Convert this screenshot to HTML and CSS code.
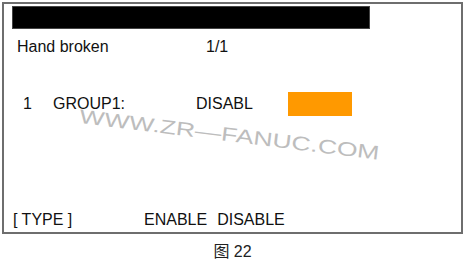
FILE: index.html
```html
<!DOCTYPE html>
<html>
<head>
<meta charset="utf-8">
<link rel="stylesheet" href="styles.css">
</head>
<body>
<div class="frame">
  <div class="titlebar"></div>
  <div class="row row-head">
    <span>Hand broken</span>
    <span>1/1</span>
  </div>
  <div class="row row-item">
    <span>1</span>
    <span>GROUP1:</span>
    <span>DISABL</span>
    <span class="swatch"></span>
  </div>
  <div class="row row-keys">
    <span>[ TYPE ]</span>
    <span class="keys"><span>ENABLE</span><span>DISABLE</span></span>
  </div>
  <div class="watermark">WWW.ZR—FANUC.COM</div>
</div>
<div class="caption">图 22</div>
</body>
</html>
```
FILE: styles.css
```css
html, body {
  margin: 0;
  padding: 0;
  background: #fff;
}
body {
  font-family: "Liberation Sans", Arial, sans-serif;
  font-size: 16px;
  line-height: 18px;
  color: #111;
  width: 468px;
  height: 264px;
  overflow: hidden;
}
.frame {
  position: relative;
  box-sizing: border-box;
  margin: 2px 0 0 2px;
  width: 461px;
  height: 232px;
  border: 2px solid #6e6e6e;
  display: flex;
  flex-direction: column;
  padding-bottom: 3px;
}
.titlebar {
  margin: 2px 0 0 8px;
  width: 358px;
  height: 23px;
  box-sizing: border-box;
  background: #000;
  border: 1px solid #444;
}
.row {
  display: grid;
  align-items: center;
}
.row-head {
  margin-top: 9px;
  padding-left: 13px;
  grid-template-columns: 189px auto;
}
.row-item {
  margin-top: 36px;
  padding-left: 19px;
  grid-template-columns: 30px 143px 92px 64px;
  height: 24px;
}
.swatch {
  display: block;
  width: 64px;
  height: 24px;
  background: #ff9900;
}
.row-keys {
  margin-top: auto;
  padding-left: 9px;
  grid-template-columns: 131px auto;
}
.keys {
  display: flex;
  gap: 10px;
}
.watermark {
  position: absolute;
  left: 77px;
  top: 101px;
  font-size: 19.5px;
  line-height: 22px;
  color: #bdbdbd;
  transform: rotate(7deg) scaleX(1.36);
  transform-origin: left top;
  white-space: nowrap;
}
.caption {
  width: 461px;
  margin: 9px 0 0 2px;
  text-align: center;
  font-family: "Liberation Sans", "Noto Sans CJK SC", sans-serif;
  color: #222;
}
```
